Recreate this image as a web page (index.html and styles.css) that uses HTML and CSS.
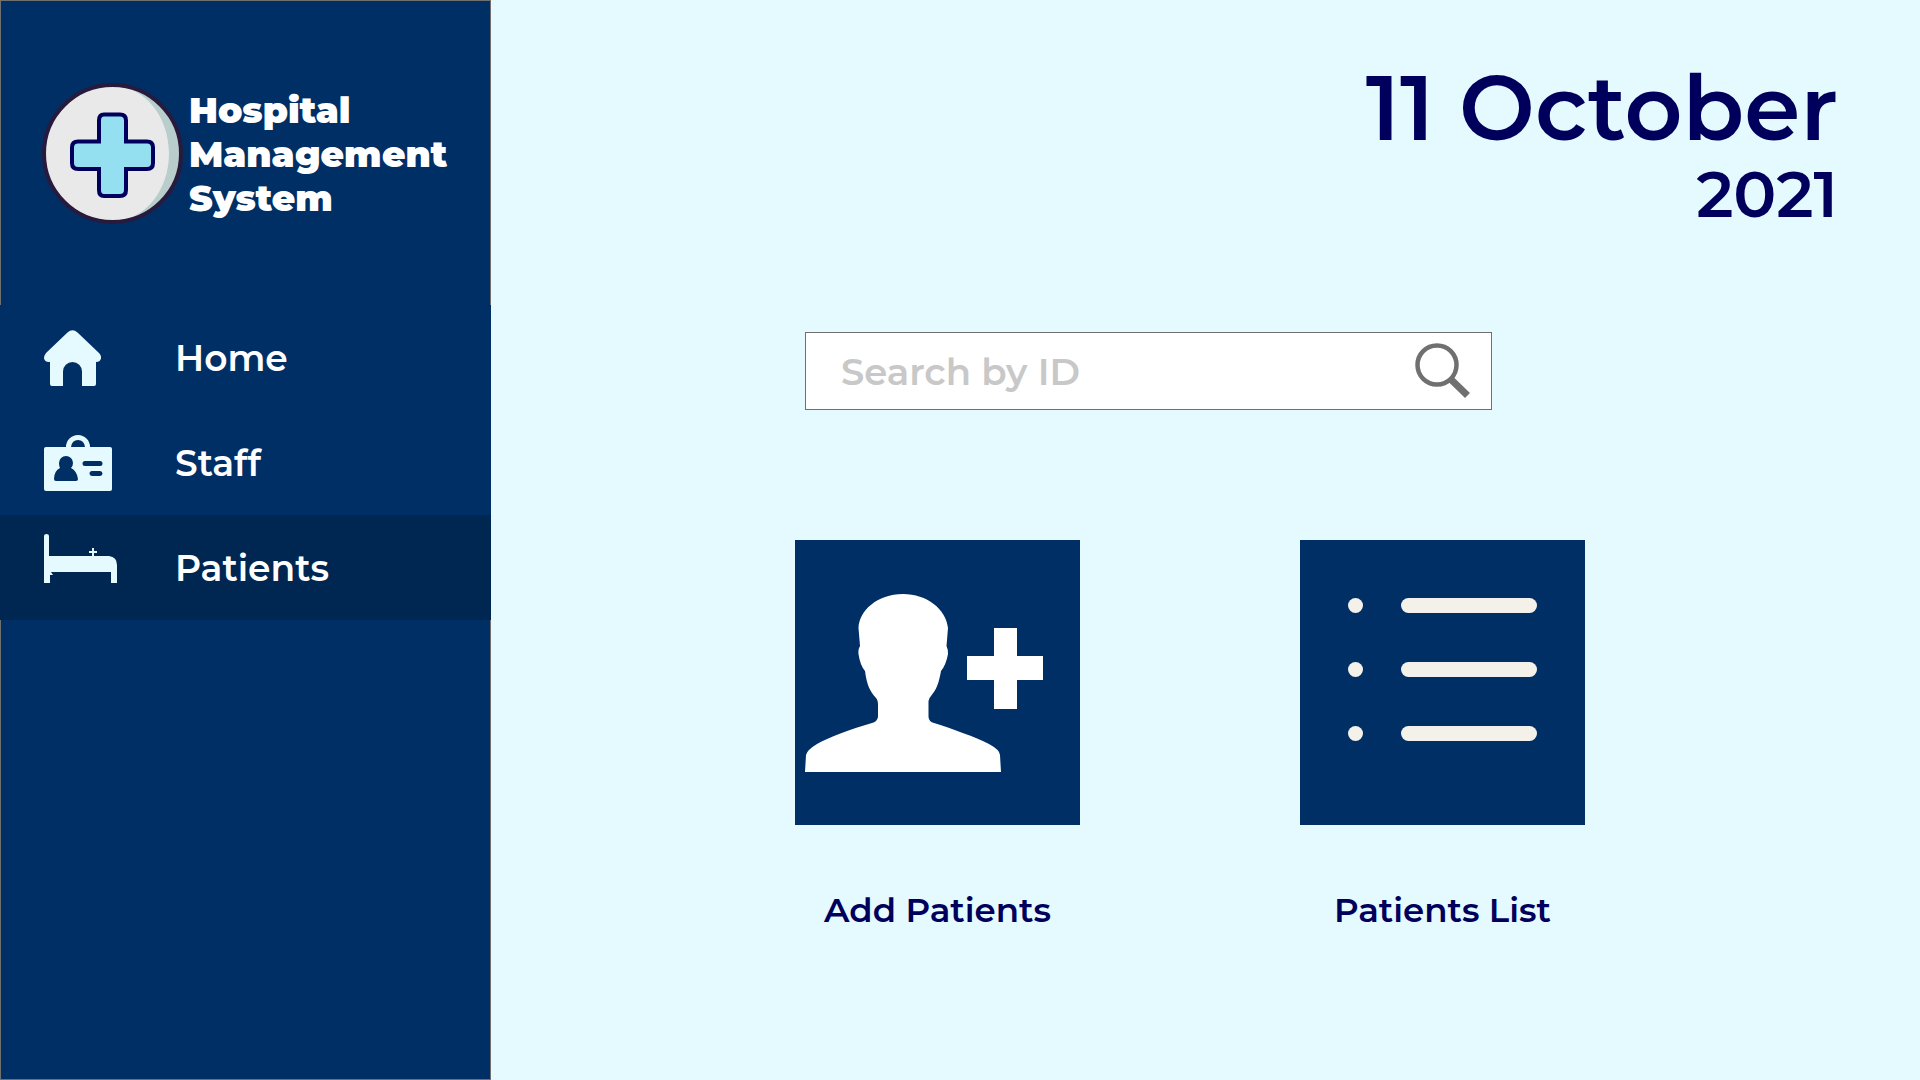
FILE: index.html
```html
<!DOCTYPE html>
<html lang="en">
<head>
<meta charset="utf-8">
<meta name="viewport" content="width=device-width, initial-scale=1">
<title>Hospital Management System</title>
<link rel="stylesheet" href="styles.css">
</head>
<body class="app">
  <aside class="sidebar">
    <header class="brand">
      <svg class="brand-logo" width="141" height="141" viewBox="0 0 141 141" aria-hidden="true">
        <circle cx="70.500" cy="70.500" r="68.500" fill="#b9cdcd"/>
        <path d="M70.500 3 A67.500 67.500 0 0 0 70.500 138 C104 138 127 106 127 70.500 C127 35 104 3 70.500 3Z" fill="#e9e9e9"/>
        <circle cx="70.500" cy="70.500" r="68.500" fill="none" stroke="#281a3c" stroke-width="4"/>
        <path d="M62 31.500H78Q84 31.500 84 37.500V58.500H105Q111 58.500 111 64.500V80Q111 86 105 86H84V107Q84 113 78 113H62Q57 113 57 107V86H36Q30 86 30 80V64.500Q30 58.500 36 58.500H57V37.500Q57 31.500 62 31.500Z" fill="#94e0f1" stroke="#00005c" stroke-width="4"/>
      </svg>
      <h1 class="brand-name">Hospital<br>Management<br>System</h1>
    </header>
    <nav class="nav">
      <a class="nav-link" href="#home">
        <span class="nav-icon">
          <svg width="57" height="56" viewBox="0 0 57 56" fill="currentColor" aria-hidden="true"><path d="M23.500 2.500Q28.500-2 33.500 2.500L55 23Q57.500 25.500 57 28.500Q56 32 52 32V54Q52 56 50 56H38V41.500A9.500 9.500 0 0 0 19 41.500V56H8Q6 56 6 54V32H5Q1 32 0 28.500Q0 25.500 2 23Z"/></svg>
        </span>
        <span>Home</span>
      </a>
      <a class="nav-link" href="#staff">
        <span class="nav-icon">
          <svg width="68" height="56" viewBox="0 0 68 56" fill="currentColor" aria-hidden="true"><path fill-rule="evenodd" d="M2 12H22A12 12 0 0 1 46 12H66Q68 12 68 14V54Q68 56 66 56H2Q0 56 0 54V14Q0 12 2 12ZM27 12H41Q40 5 34 5Q28 5 27 12ZM12 46H32Q34 46 34 44Q33 36 27 33Q29 31 29 28A7 7 0 0 0 15 28Q15 31 16 33Q10 36 10 44Q10 46 12 46ZM41 26A2.500 2.500 0 0 0 41 31H56A2.500 2.500 0 0 0 56 26ZM48 36A2.500 2.500 0 0 0 48 41H56A2.500 2.500 0 0 0 56 36Z"/></svg>
        </span>
        <span>Staff</span>
      </a>
      <a class="nav-link nav-link--current" href="#patients" aria-current="page">
        <span class="nav-icon">
          <svg width="73" height="70" viewBox="0 0 73 70" fill="currentColor" aria-hidden="true"><path d="M0 3Q0 1 2.500 1Q5 1 5 3V23H48V20H45V18H48V15H50V18H53V20H50V23H65Q73 24 73 32V50H67V39H7L9 42H6V50H0Z"/></svg>
        </span>
        <span>Patients</span>
      </a>
    </nav>
  </aside>

  <main class="content">
    <time class="date" datetime="2021-10-11">
      <span class="date-day">11 October</span>
      <span class="date-year">2021</span>
    </time>

    <form class="search" role="search">
      <input class="search-input" type="text" placeholder="Search by ID" aria-label="Search by ID">
      <button class="search-button" type="submit" aria-label="Search">
        <svg width="56" height="56" viewBox="0 0 56 56" fill="none" stroke="#707070" aria-hidden="true"><circle cx="22" cy="22" r="19.500" stroke-width="4.500"/><path d="M35.500 36L52.500 52.500" stroke-width="7"/></svg>
      </button>
    </form>

    <div class="actions">
      <a class="action" href="#add-patients">
        <svg class="action-tile" viewBox="0 0 285 285" aria-hidden="true">
          <path fill="#fff" d="M108 54C82 54 64 71 63.500 88L65 106Q63 109 63.500 114Q65 125 70 131C72 146 75 151 81 158Q83 160 83 165V177Q82 182 77 183C55 189 33 198 22 204Q12 210 11 215L10 232H206L205 215Q205 210 194 204C180 197 158 189 139 183Q134 182 133.500 177V161Q134 158 136 156C142 149 144 142 146 131Q151 125 153 114Q153 109 151.500 106L153 88C151 69 132 54 108 54Z"/>
          <path fill="#fff" d="M199 88H222V116H248V140H222V169H199V140H172V116H199Z"/>
        </svg>
        <span class="action-label">Add Patients</span>
      </a>
      <a class="action" href="#patients-list">
        <svg class="action-tile" viewBox="0 0 285 285" fill="#f4f1ea" aria-hidden="true">
          <circle cx="55.500" cy="65.500" r="7.500"/><rect x="101" y="58" width="136" height="15" rx="7.500"/>
          <circle cx="55.500" cy="129.500" r="7.500"/><rect x="101" y="122" width="136" height="15" rx="7.500"/>
          <circle cx="55.500" cy="193.500" r="7.500"/><rect x="101" y="186" width="136" height="15" rx="7.500"/>
        </svg>
        <span class="action-label">Patients List</span>
      </a>
    </div>
  </main>
</body>
</html>
```

FILE: styles.css
```css
* {
  box-sizing: border-box;
}

.app {
  display: flex;
  min-height: 100vh;
  margin: 0;
  background: #e5faff;
  color: #00005c;
  font-family: Montserrat, Inter, sans-serif;
  font-weight: 600;
}

.sidebar {
  flex: 0 0 491px;
  border: 1px solid #707070;
  background: #002f66;
  color: #fff;
}

.brand {
  display: flex;
  align-items: center;
  gap: 6px;
  height: 304px;
  padding: 0 0 0 41px;
}

.brand-logo {
  flex: none;
}

.brand-name {
  margin: 0;
  padding-top: 2px;
  font-size: 36px;
  font-weight: 900;
  line-height: 44px;
}

.nav {
  margin: 0 -1px;
  background: #002f66;
}

.nav-link {
  display: flex;
  align-items: center;
  height: 105px;
  padding: 0 44px;
  color: #fff;
  font-size: 36px;
  text-decoration: none;
}

.nav-link--current {
  background: #002652;
}

.nav-icon {
  flex: 0 0 131px;
  display: flex;
  color: #e5faff;
}

.content {
  flex: 1;
  min-width: 0;
  padding: 60px 82px 60px 304px;
}

.date {
  display: block;
  text-align: right;
}

.date-day,
.date-year {
  display: block;
}

.date-day {
  font-size: 90px;
  line-height: 96px;
}

.date-year {
  font-size: 64px;
  line-height: 76px;
}

.search {
  display: flex;
  align-items: center;
  width: 100%;
  max-width: 687px;
  height: 78px;
  margin: 100px 0 0 10px;
  border: 1px solid #707070;
  background: #fff;
}

.search-input {
  flex: 1;
  min-width: 0;
  height: 100%;
  padding: 0 0 0 35px;
  border: 0;
  background: none;
  color: #707070;
  font: inherit;
  font-size: 37px;
}

.search-input::placeholder {
  color: #c8c8c8;
  opacity: 1;
}

.search-button {
  display: flex;
  padding: 0 20px;
  border: 0;
  background: none;
  cursor: pointer;
}

.actions {
  display: flex;
  flex-wrap: wrap;
  gap: 60px 220px;
  margin-top: 130px;
}

.action {
  flex: 0 0 285px;
  color: inherit;
  text-align: center;
  text-decoration: none;
}

.action-tile {
  display: block;
  width: 100%;
  background: #002f66;
}

.action-label {
  display: block;
  margin-top: 63px;
  font-size: 34px;
  line-height: 44px;
}
```
